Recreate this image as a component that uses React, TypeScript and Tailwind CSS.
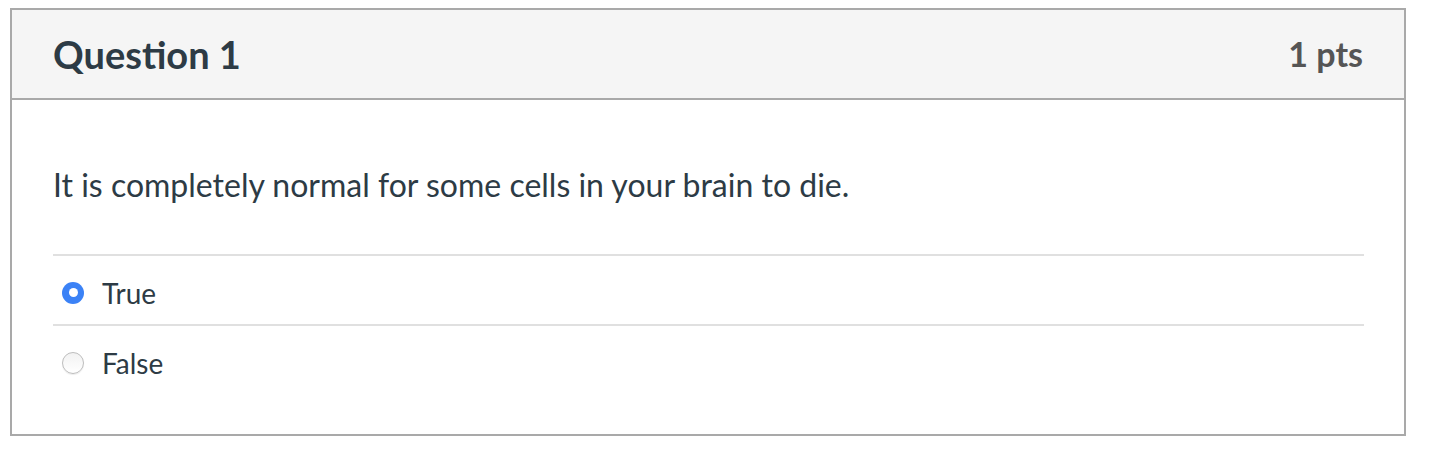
export default function App() {
  const answers = [
    { label: 'True', checked: true },
    { label: 'False', checked: false },
  ];

  return (
    <div className="pl-[10px] pt-[8px] font-['Lato','Liberation_Sans',sans-serif] text-[#2d3b45]">
      <div className="w-[1396px] h-[428px] border-2 border-[#a9a9a9] bg-white">
        <div className="flex h-[90px] items-center justify-between border-b-2 border-[#a9a9a9] bg-[#f5f5f5] px-[41px]">
          <h2 className="text-[38px] font-bold leading-none">Question 1</h2>
          <span className="text-[34px] font-bold leading-none text-[#555]">1 pts</span>
        </div>
        <div className="pl-[41px] pr-[40px]">
          <p className="pt-[66px] text-[32px] leading-[38px]">
            It is completely normal for some cells in your brain to die.
          </p>
          <div className="mt-[50px]">
            {answers.map((a) => (
              <div
                key={a.label}
                className="flex h-[70px] items-center border-t-2 border-[#e0e0e0] pl-[9px] pt-[5px]"
              >
                {a.checked ? (
                  <span className="flex h-[22px] w-[22px] items-center justify-center rounded-full bg-[#3b82f6]">
                    <span className="h-[9px] w-[9px] rounded-full bg-white" />
                  </span>
                ) : (
                  <span className="h-[22px] w-[22px] rounded-full border border-[#bdbdbd] bg-gradient-to-b from-[#f2f2f2] to-white shadow-[0_1px_1px_rgba(0,0,0,0.08)]" />
                )}
                <span className="ml-[18px] text-[28px] leading-none">{a.label}</span>
              </div>
            ))}
          </div>
        </div>
      </div>
    </div>
  );
}
